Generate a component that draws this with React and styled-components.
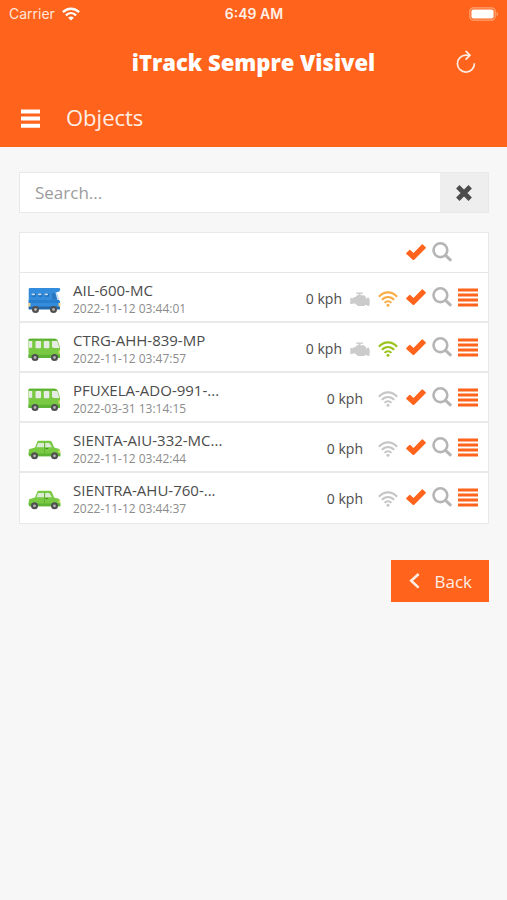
import React, { useState } from "react";
import styled, { createGlobalStyle } from "styled-components";

const ORANGE = "#ff631c";

const GlobalStyle = createGlobalStyle`
  * {
    box-sizing: border-box;
  }

  body {
    margin: 0;
    background: #f7f7f7;
    color: #4c4c4c;
    font-family: "Open Sans", "Noto Sans", sans-serif;
  }

  button, input {
    font-family: inherit;
  }
`;

const Header = styled.header`
  background: ${ORANGE};
  color: #fff;
`;

const StatusBar = styled.div`
  display: grid;
  grid-template-columns: 1fr auto 1fr;
  align-items: center;
  height: 27px;
  padding: 0 8px 0 9px;
  font-family: Inter, sans-serif;
  font-size: 14px;
`;

const Carrier = styled.div`
  display: flex;
  align-items: center;
  gap: 7px;
  color: #ffe6d9;
`;

const Clock = styled.div`
  font-weight: 600;
  color: #ffefe6;
`;

const Battery = styled.div`
  justify-self: end;
  display: flex;
`;

const TitleBar = styled.div`
  display: grid;
  grid-template-columns: 1fr auto 1fr;
  align-items: center;
  height: 70px;
  padding: 0 31px;
`;

const Title = styled.h1`
  grid-column: 2;
  margin: 0;
  font-size: 22px;
  font-weight: 800;
  line-height: 28px;
`;

const IconButton = styled.button`
  display: flex;
  align-items: center;
  justify-content: center;
  padding: 0;
  border: 0;
  background: none;
  color: ${(props) => props.$color || "#fff"};
  justify-self: end;
  cursor: pointer;
`;

const NavBar = styled.div`
  display: flex;
  align-items: center;
  gap: 26px;
  height: 50px;
  padding: 0 20px 8px;
`;

const PageName = styled.h2`
  margin: 0;
  padding-bottom: 2px;
  font-size: 22px;
  font-weight: 400;
  line-height: 30px;
  color: #ffeee5;
`;

const Main = styled.main`
  padding: 25px 18px 25px 19px;
`;

const SearchForm = styled.form`
  display: flex;
  height: 41px;
  margin-bottom: 19px;
  border: 1px solid #e9e9e9;
  background: #fff;
`;

const SearchInput = styled.input`
  flex: 1;
  min-width: 0;
  padding: 0 15px;
  border: 0;
  outline: 0;
  background: none;
  color: #4c4c4c;
  font-size: 17px;

  &::placeholder {
    color: #9c9c9c;
    opacity: 1;
  }
`;

const ClearButton = styled.button`
  display: flex;
  align-items: center;
  justify-content: center;
  width: 48px;
  padding: 0;
  border: 0;
  background: #eee;
  color: #4c4c4c;
  cursor: pointer;
`;

const Table = styled.table`
  width: 100%;
  table-layout: fixed;
  border: 1px solid #e9e9e9;
  border-spacing: 0;
  background: #fff;
`;

const Col = styled.col`
  width: ${(props) => props.$width}px;
`;

const HeadCell = styled.th`
  height: 40px;
  padding: 0 0 2px;
  border-bottom: 1px solid #e6e6e6;
`;

const Cell = styled.td`
  height: 50px;
  padding: 0;
  border-bottom: 2px solid #e9e9e9;

  tr:last-child > & {
    border-bottom-color: #fff;
  }
`;

const VehicleCell = styled(Cell)`
  padding: 6px 0 0 8px;

  svg {
    display: block;
  }
`;

const TextCell = styled(Cell)`
  padding-top: 4px;
`;

const Name = styled.div`
  color: #4c4c4c;
  font-size: 15px;
  line-height: 20px;
  white-space: nowrap;
`;

const Time = styled.div`
  color: #8c8c8c;
  font-size: 12px;
  line-height: 18px;
`;

const Status = styled.div`
  display: flex;
  align-items: center;
  justify-content: flex-end;
  gap: 8px;
`;

const Speed = styled.span`
  margin-right: ${(props) => (props.$engine ? 0 : 7)}px;
  font-size: 14px;
  line-height: 20px;
  white-space: nowrap;
`;

const Actions = styled.div`
  display: flex;
  align-items: center;
  gap: 6px;
  padding-left: 8px;
`;

const Footer = styled.div`
  display: flex;
  justify-content: flex-end;
  margin-top: 36px;
`;

const BackButton = styled.button`
  display: flex;
  align-items: center;
  gap: 14px;
  height: 42px;
  padding: 2px 17px 0 18px;
  border: 0;
  background: ${ORANGE};
  color: #ffeee5;
  font-size: 17px;
  line-height: 24px;
  cursor: pointer;
`;

const WifiIcon = () => (
  <svg width="20" height="16" viewBox="0 0 20 16" fill="none" stroke="currentColor" strokeWidth="2.1" aria-hidden="true">
    <path d="M.9 5.8C6-.1 14-.1 19.1 5.8" />
    <path d="M3.9 8.9C7.3 5 12.7 5 16.1 8.9" />
    <path d="M6.6 11.9C8.6 9.7 11.4 9.7 13.4 11.9" />
    <circle cx="10" cy="14.2" r="1.5" fill="currentColor" stroke="none" />
  </svg>
);

const CarrierWifiIcon = () => (
  <svg width="18" height="14" viewBox="0 0 18 14" fill="none" stroke="#fff" strokeWidth="2.4" aria-hidden="true">
    <path d="M.9 5.2C5.5.5 12.5.5 17.1 5.2" />
    <path d="M3.9 8.3C6.9 5.4 11.1 5.4 14.1 8.3" />
    <path d="M9 13.6L6.1 10.7Q9 8.3 11.9 10.7z" fill="#fff" stroke="none" />
  </svg>
);

const BatteryIcon = () => (
  <svg width="30" height="14" viewBox="0 0 30 14" aria-hidden="true">
    <rect x="0.8" y="0.8" width="25.4" height="12.4" rx="3.6" fill="none" stroke="#ffa578" strokeWidth="1.2" />
    <rect x="2.4" y="2.4" width="22.2" height="9.2" rx="2" fill="#fff" />
    <path d="M27.6 5v4c2-.7 2-3.3 0-4z" fill="#ffa578" />
  </svg>
);

const ReloadIcon = () => (
  <svg width="20" height="24" viewBox="0 0 20 24" fill="none" stroke="#ffece2" strokeWidth="1.7" aria-hidden="true">
    <path d="M18.4 13.2A8.5 8.5 0 1 1 10 5.1h3.6" />
    <path d="M9.6.9l4.4 4.3-4.4 4.4" />
  </svg>
);

const MenuIcon = () => (
  <svg width="20" height="20" viewBox="0 0 20 20" fill="currentColor" aria-hidden="true">
    <path d="M1 1.500h19v4H1zM1 8.600h19v4H1zM1 15.800h19v4H1z" />
  </svg>
);

const CloseIcon = () => (
  <svg width="16" height="16" viewBox="0 0 16 16" aria-hidden="true">
    <path d="M3.500 3.500l9 9M12.500 3.500l-9 9" stroke="currentColor" strokeWidth="4.800" strokeLinecap="square" />
  </svg>
);

const CheckIcon = () => (
  <svg width="20" height="18" viewBox="0 0 20 18" fill="currentColor" aria-hidden="true">
    <path d="M.3 9.900l3-3q.5-.4 1 0L7.500 10 15.800 1.400q.5-.4 1 0L19.700 4.300q.4.500 0 1L8 16.900q-.5.400-1 0L.3 10.900q-.4-.5 0-1z" />
  </svg>
);

const SearchIcon = () => (
  <svg width="20" height="20" viewBox="0 0 20 20" fill="none" stroke="currentColor" aria-hidden="true">
    <circle cx="8.400" cy="8.200" r="6.900" strokeWidth="2.600" />
    <path d="M13.500 13.300l4.800 4.500" strokeWidth="3" strokeLinecap="round" />
  </svg>
);

const LinesIcon = () => (
  <svg width="20" height="19" viewBox="0 0 20 19" fill="currentColor" aria-hidden="true">
    <path d="M0 .4h20v3H0zM0 5.400h20v3H0zM0 10.400h20v3H0zM0 15.400h20v3H0z" />
  </svg>
);

const EngineIcon = () => (
  <svg width="20" height="15" viewBox="0 0 20 15" fill="#cbcbcb" aria-hidden="true">
    <path d="M6 .5h7v1.300h-2.500V3.300H14l2 2v1.200h1l.5-1h1.200l1 2.500v4l-.7 2h-1.500l-.7-1H15V14H8l-3-2.500H3.200L2 12H.3V6H2l1.200.5V5.300h2L7 3.300h1.500V1.800H6z" />
  </svg>
);

const ChevronIcon = () => (
  <svg width="11" height="18" viewBox="0 0 11 18" fill="none" stroke="currentColor" strokeWidth="2.600" aria-hidden="true">
    <path d="M9.600 1L2.200 7.800l7.400 6.800" />
  </svg>
);

const Wheels = ({ left, right, y }) => (
  <>
    {[left, right].map((x) => (
      <g key={x}>
        <circle cx={x} cy={y} r="3.500" fill="#4f4f4f" />
        <circle cx={x} cy={y} r="1.400" fill="#b5b5b5" />
      </g>
    ))}
  </>
);

const CamperIcon = () => (
  <svg width="33" height="27" viewBox="0 0 33 27" role="img" aria-label="Camper">
    <path d="M1.500 1H31q1.500 0 1.200 1.800-.3 2-2.200 2.200h-1.500L31 13l1 2v7H1.500Q.7 22 .7 21V2.500Q.7 1 1.500 1z" fill="#338cdc" />
    <path d="M.7 13H31l1 2v1H.7z" fill="#287fce" />
    <path d="M.7 19.500H32V22.500H.7z" fill="#2468aa" />
    <path d="M24 6h3l2 6.500h-5z" fill="#2b77be" />
    <path d="M27.500 5.500h1.200l2.300 7.500h-1.500z" fill="#cfe5f8" />
    <g fill="#236db3">
      <rect x="3.500" y="6.500" width="4.500" height="3.200" rx="1" />
      <rect x="10" y="6.500" width="4.500" height="3.200" rx="1" />
      <rect x="16.500" y="6.500" width="4.500" height="3.200" rx="1" />
    </g>
    <g fill="#c5def4">
      <rect x="3.500" y="6.500" width="3.500" height="1.800" rx=".8" />
      <rect x="10" y="6.500" width="3.500" height="1.800" rx=".8" />
      <rect x="16.500" y="6.500" width="3.500" height="1.800" rx=".8" />
    </g>
    <path d="M.4 16h2v3.500h-2zM30.500 16h2v3.500h-2z" fill="#f7d784" />
    <Wheels left={7.500} right={25.500} y={22.500} />
  </svg>
);

const BusIcon = () => (
  <svg width="33" height="24" viewBox="0 0 33 24" role="img" aria-label="Bus">
    <path d="M1.500.8H27q2 0 2.700 1.800L32 9.500V20H1.200Q.5 20 .5 19V2Q.5.8 1.500.8z" fill="#79c943" />
    <path d="M1.500.8H27q1.200 0 2 1.600H.5Q.5.8 1.500.8z" fill="#5daf32" />
    <g fill="#e6ebe3">
      <path d="M1 3h3.200v6.800H1z" />
      <rect x="7.500" y="3" width="5.500" height="7.300" rx="1" />
      <rect x="15.800" y="3" width="5.500" height="7.300" rx="1" />
      <path d="M24 3h5.200l2.300 7h-5.700q-1.800 0-1.800-1.800z" />
    </g>
    <path d="M.5 16.800H32V20H.5z" fill="#5eb535" />
    <path d="M30.500 12.500H32v3h-1.500z" fill="#e8d879" />
    <Wheels left={7} right={26.500} y={19.500} />
  </svg>
);

const CarIcon = () => (
  <svg width="33" height="20" viewBox="0 0 33 20" role="img" aria-label="Car">
    <path d="M1 9.200l6-1.700L9.200 2Q9.800.8 11 .8h10.500q1.700 0 2.300 1.300l2.400 5.300 4.500 1.300q1.600.7 1.600 3v4.500H1.500Q.5 15.500.5 14z" fill="#79c943" />
    <path d="M10 3h6v4.200H8.500zM17.200 3h3.300q1 0 1.600.9l1.800 3.300h-6.700z" fill="#dcebd5" />
    <path d="M16.500 2.500v11" stroke="#5aaf33" strokeWidth=".8" />
    <path d="M17.500 8.500h2.500" stroke="#3c8a20" strokeWidth=".9" />
    <path d="M.5 13.500h31.800v2.800H1.500z" fill="#5eb535" />
    <path d="M30.500 10l1.700 1v1.800h-1.700z" fill="#eedb72" />
    <Wheels left={6.500} right={26.500} y={15.800} />
  </svg>
);

const vehicleIcons = { camper: CamperIcon, bus: BusIcon, car: CarIcon };

const objects = [
  { name: "AIL-600-MC", time: "2022-11-12 03:44:01", icon: "camper", engine: true, signal: "#f9ad45" },
  { name: "CTRG-AHH-839-MP", time: "2022-11-12 03:47:57", icon: "bus", engine: true, signal: "#9ac31c" },
  { name: "PFUXELA-ADO-991-...", time: "2022-03-31 13:14:15", icon: "bus", engine: false, signal: "#c6c6c6" },
  { name: "SIENTA-AIU-332-MC...", time: "2022-11-12 03:42:44", icon: "car", engine: false, signal: "#c6c6c6" },
  { name: "SIENTRA-AHU-760-...", time: "2022-11-12 03:44:37", icon: "car", engine: false, signal: "#c6c6c6" },
];

const Signal = styled.span`
  display: flex;
  color: ${(props) => props.$color};
`;

const RowActions = ({ label, menu }) => (
  <Actions>
    <IconButton type="button" $color={ORANGE} aria-label={"Show " + label}>
      <CheckIcon />
    </IconButton>
    <IconButton type="button" $color="#b5b5b5" aria-label={"Find " + label}>
      <SearchIcon />
    </IconButton>
    {menu && (
      <IconButton type="button" $color={ORANGE} aria-label={"Menu for " + label}>
        <LinesIcon />
      </IconButton>
    )}
  </Actions>
);

const ObjectRow = ({ item }) => {
  const Vehicle = vehicleIcons[item.icon];
  return (
    <tr>
      <VehicleCell>
        <Vehicle />
      </VehicleCell>
      <TextCell>
        <Name>{item.name}</Name>
        <Time>{item.time}</Time>
      </TextCell>
      <TextCell>
        <Status>
          <Speed $engine={item.engine}>0 kph</Speed>
          {item.engine && <EngineIcon />}
          <Signal $color={item.signal}>
            <WifiIcon />
          </Signal>
        </Status>
      </TextCell>
      <Cell>
        <RowActions label={item.name} menu />
      </Cell>
    </tr>
  );
};

export default function App() {
  const [search, setSearch] = useState("");
  const found = objects.filter((item) =>
    item.name.toLowerCase().includes(search.toLowerCase())
  );

  return (
    <>
      <GlobalStyle />
      <Header>
        <StatusBar>
          <Carrier>
            Carrier
            <CarrierWifiIcon />
          </Carrier>
          <Clock>6:49 AM</Clock>
          <Battery>
            <BatteryIcon />
          </Battery>
        </StatusBar>
        <TitleBar>
          <Title>iTrack Sempre Visivel</Title>
          <IconButton type="button" aria-label="Reload">
            <ReloadIcon />
          </IconButton>
        </TitleBar>
        <NavBar>
          <IconButton type="button" aria-label="Menu">
            <MenuIcon />
          </IconButton>
          <PageName>Objects</PageName>
        </NavBar>
      </Header>

      <Main>
        <SearchForm onSubmit={(event) => event.preventDefault()}>
          <SearchInput
            type="text"
            aria-label="Search"
            placeholder="Search..."
            value={search}
            onChange={(event) => setSearch(event.target.value)}
          />
          <ClearButton type="button" aria-label="Clear" onClick={() => setSearch("")}>
            <CloseIcon />
          </ClearButton>
        </SearchForm>

        <Table>
          <colgroup>
            <Col $width={53} />
            <col />
            <Col $width={120} />
            <Col $width={90} />
          </colgroup>
          <thead>
            <tr>
              <HeadCell colSpan={3} />
              <HeadCell>
                <RowActions label="all objects" />
              </HeadCell>
            </tr>
          </thead>
          <tbody>
            {found.map((item) => (
              <ObjectRow key={item.name} item={item} />
            ))}
          </tbody>
        </Table>

        <Footer>
          <BackButton type="button">
            <ChevronIcon />
            Back
          </BackButton>
        </Footer>
      </Main>
    </>
  );
}
